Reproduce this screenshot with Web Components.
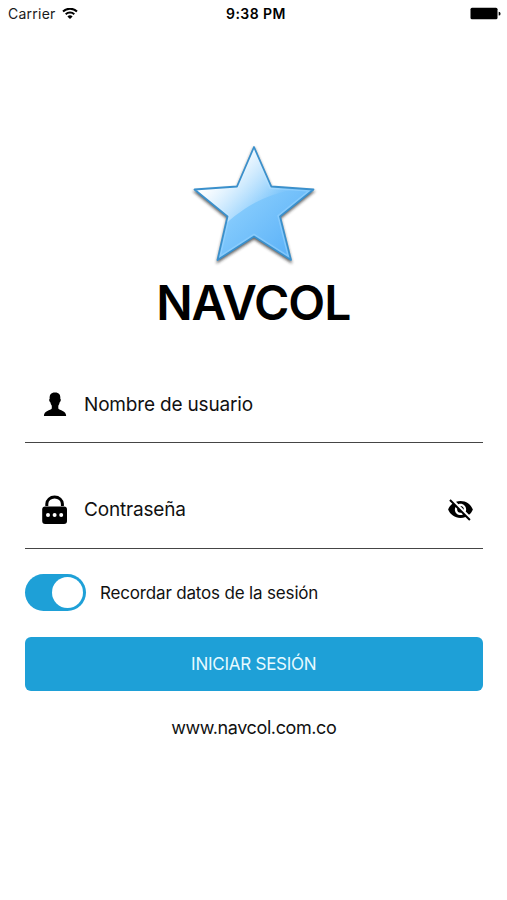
<!DOCTYPE html>
<html lang="es">
  <head>
    <meta charset="UTF-8" />
    <meta name="viewport" content="width=device-width, initial-scale=1.0" />
    <title>NAVCOL</title>
    <style>
      body {
        margin: 0;
        background: #fff;
        color: #000;
        font-family: Inter, "Liberation Sans", sans-serif;
      }
    </style>
  </head>
  <body>
    <login-screen></login-screen>

    <script>
      // Small helper: open shadow root with the given markup
      function attach(element, html) {
        element.attachShadow({ mode: "open" }).innerHTML = html;
      }

      // Phone status bar: carrier, clock, battery
      class StatusBar extends HTMLElement {
        connectedCallback() {
          attach(
            this,
            `
            <style>
              :host {
                display: grid;
                grid-template-columns: 1fr auto 1fr;
                align-items: center;
                height: 27px;
                padding: 0 6px 0 8px;
                font-size: 14px;
                line-height: 27px;
                color: #1a1a1a;
              }
              .carrier { display: flex; align-items: center; gap: 6px; letter-spacing: 0.25px; }
              .time { font-weight: 600; font-size: 14px; letter-spacing: 0.45px; color: #000; padding-left: 3px; }
              .battery { justify-self: end; }
              svg { display: block; }
            </style>
            <div class="carrier">
              <span>${this.getAttribute("carrier")}</span>
              <svg width="16" height="12" viewBox="0 0 16 12" fill="none" stroke="#000" stroke-width="2">
                <path d="M1 3.5a10.2 10.2 0 0 1 14 0" />
                <path d="M3.7 6.3a6.3 6.3 0 0 1 8.6 0" />
                <path d="M8 11 5.4 8.4a3.8 3.8 0 0 1 5.2 0z" fill="#000" stroke="none" />
              </svg>
            </div>
            <div class="time">${this.getAttribute("time")}</div>
            <svg class="battery" width="31" height="13" viewBox="0 0 31 13">
              <rect x="0.5" y="0.8" width="27" height="11.4" rx="1.5" />
              <path d="M28.7 4.8a1.8 1.8 0 0 1 0 3.7z" />
            </svg>
            `
          );
        }
      }
      customElements.define("status-bar", StatusBar);

      // Blue star with the brand name below
      class BrandLogo extends HTMLElement {
        connectedCallback() {
          attach(
            this,
            `
            <style>
              :host { display: flex; flex-direction: column; align-items: center; }
              svg { display: block; }
              h1 {
                margin: 1px 0 3px;
                font-size: 48px;
                line-height: 58px;
                font-weight: 600;
                letter-spacing: -1px;
                text-indent: -1px;
              }
            </style>
            <svg width="134" height="134" viewBox="187 139 134 134">
              <defs>
                <linearGradient id="body" x1="205" y1="165" x2="290" y2="255" gradientUnits="userSpaceOnUse">
                  <stop offset="0" stop-color="#b5e0ff" />
                  <stop offset="0.5" stop-color="#80c8fc" />
                  <stop offset="1" stop-color="#5cb2f8" />
                </linearGradient>
                <linearGradient id="shine" x1="222" y1="172" x2="264" y2="210" gradientUnits="userSpaceOnUse">
                  <stop offset="0" stop-color="#fff" stop-opacity="0.95" />
                  <stop offset="1" stop-color="#fff" stop-opacity="0.06" />
                </linearGradient>
                <path id="star" d="M254 147 271.3 186.5 313.5 189.5 280 216.5 291 260 254 236.5 217.5 260 227.5 216.5 194.5 189.5 237 186.5z" />
                <clipPath id="clip"><use href="#star" /></clipPath>
                <filter id="blur" x="-20%" y="-20%" width="140%" height="140%">
                  <feGaussianBlur stdDeviation="1.5" />
                </filter>
              </defs>
              <use href="#star" y="2" fill="#222" stroke="#222" stroke-width="1.5" opacity="0.7" filter="url(#blur)" />
              <use href="#star" fill="url(#body)" />
              <g clip-path="url(#clip)">
                <use href="#star" fill="none" stroke="#9bd6ff" stroke-width="5" opacity="0.55" />
                <path d="M187 139H290V190C262 197 245 206 222 227L187 250z" fill="url(#shine)" />
              </g>
              <use href="#star" fill="none" stroke="#3a90cc" stroke-width="1.8" stroke-linejoin="round" />
            </svg>
            <h1><slot></slot></h1>
            `
          );
        }
      }
      customElements.define("brand-logo", BrandLogo);

      // Underlined row with a leading icon, a placeholder and an optional action
      class FormField extends HTMLElement {
        connectedCallback() {
          attach(
            this,
            `
            <style>
              :host {
                display: flex;
                align-items: center;
                box-sizing: border-box;
                height: 77px;
                padding: 0 9px 0 15px;
                border-bottom: 1.5px solid #454545;
                font-size: 19px;
                line-height: 24px;
                letter-spacing: -0.18px;
                color: #111;
              }
              .label { flex: 1; margin-left: 15px; }
              ::slotted(svg) { display: block; flex: none; }
            </style>
            <slot name="icon"></slot>
            <span class="label"><slot></slot></span>
            <slot name="action"></slot>
            `
          );
        }
      }
      customElements.define("form-field", FormField);

      class ToggleSwitch extends HTMLElement {
        connectedCallback() {
          attach(
            this,
            `
            <style>
              :host { display: flex; align-items: center; gap: 14px; font-size: 17px; line-height: 24px; letter-spacing: -0.17px; color: #111; }
              .track {
                display: flex;
                justify-content: flex-end;
                box-sizing: border-box;
                width: 61px;
                height: 37px;
                padding: 3px;
                border-radius: 19px;
                background: #1ea0d7;
              }
              .knob { width: 31px; height: 31px; border-radius: 50%; background: #fff; }
            </style>
            <div class="track"><div class="knob"></div></div>
            <span class="text"><slot></slot></span>
            `
          );
        }
      }
      customElements.define("toggle-switch", ToggleSwitch);

      class PrimaryButton extends HTMLElement {
        connectedCallback() {
          attach(
            this,
            `
            <style>
              :host { display: block; }
              button {
                display: block;
                width: 100%;
                height: 54px;
                padding: 0;
                border: 0;
                border-radius: 6px;
                background: #1ea0d7;
                color: #e6faff;
                font: 400 17px/54px Inter, "Liberation Sans", sans-serif;
                letter-spacing: -0.25px;
              }
            </style>
            <button type="button"><slot></slot></button>
            `
          );
        }
      }
      customElements.define("primary-button", PrimaryButton);

      // The whole login page
      class LoginScreen extends HTMLElement {
        connectedCallback() {
          attach(
            this,
            `
            <style>
              :host { display: block; height: 900px; overflow: hidden; background: #fff; }
              main { display: flex; flex-direction: column; padding: 112px 24.5px 0 25px; }
              .user { margin-top: 31px; padding-top: 1px; }
              .password { margin-top: 29px; }
              toggle-switch { margin-top: 25px; }
              primary-button { margin-top: 26px; }
              footer { margin-top: 25px; text-align: center; font-size: 18px; line-height: 24px; letter-spacing: -0.4px; color: #111; }
            </style>
            <status-bar carrier="Carrier" time="9:38 PM"></status-bar>
            <main>
              <brand-logo>NAVCOL</brand-logo>
              <form-field class="user">
                <svg slot="icon" width="29" height="30" viewBox="0 0 29 30">
                  <path d="M15 2.500c4.200 0 5.700 2.300 5.300 6.300.9.3.5 2.900-.6 3.500-.3 1.500-.8 2.600-1.400 3.400v2.800c1.200 2.200 7.900 1.900 7.900 7.500H3.900c0-5.600 6.700-5.300 7.900-7.500v-2.800c-.6-.8-1.200-1.900-1.500-3.400-1.100-.6-1.500-3.200-.6-3.500C9.300 4.800 10.800 2.500 15 2.500z" />
                </svg>
                Nombre de usuario
              </form-field>
              <form-field class="password">
                <svg slot="icon" width="29" height="30" viewBox="0 0 29 30">
                  <path d="M6.800 11V9a7.500 6.800 0 0 1 15.600 0v2" fill="none" stroke="#000" stroke-width="3" />
                  <rect x="2.200" y="11.400" width="24.800" height="17.600" rx="3" />
                  <g fill="#fff">
                    <circle cx="8" cy="20.100" r="2" />
                    <circle cx="14.600" cy="20.100" r="2" />
                    <circle cx="21.200" cy="20.100" r="2" />
                  </g>
                </svg>
                Contraseña
                <svg slot="action" width="27" height="28" viewBox="0 0.500 24 24">
                  <path d="M12 7c2.760 0 5 2.240 5 5 0 .650-.130 1.260-.360 1.830l2.920 2.920c1.510-1.260 2.700-2.890 3.430-4.750-1.730-4.390-6-7.500-11-7.500-1.400 0-2.740.250-3.980.700l2.160 2.160C10.740 7.130 11.350 7 12 7zM2 4.270l2.280 2.280.460.460C3.080 8.300 1.780 10.020 1 12c1.730 4.390 6 7.500 11 7.500 1.550 0 3.030-.300 4.380-.840l.420.420L19.730 22 21 20.730 3.270 3 2 4.270zM7.530 9.800l1.550 1.550c-.050.210-.080.430-.080.650 0 1.660 1.340 3 3 3 .220 0 .440-.030.650-.080l1.550 1.550c-.670.330-1.410.530-2.200.530-2.760 0-5-2.240-5-5 0-.790.200-1.530.530-2.200zm4.310-.780l3.150 3.150.020-.160c0-1.660-1.340-3-3-3l-.170.010z" />
                </svg>
              </form-field>
              <toggle-switch>Recordar datos de la sesión</toggle-switch>
              <primary-button>INICIAR SESIÓN</primary-button>
              <footer>www.navcol.com.co</footer>
            </main>
            `
          );
        }
      }
      customElements.define("login-screen", LoginScreen);
    </script>
  </body>
</html>
